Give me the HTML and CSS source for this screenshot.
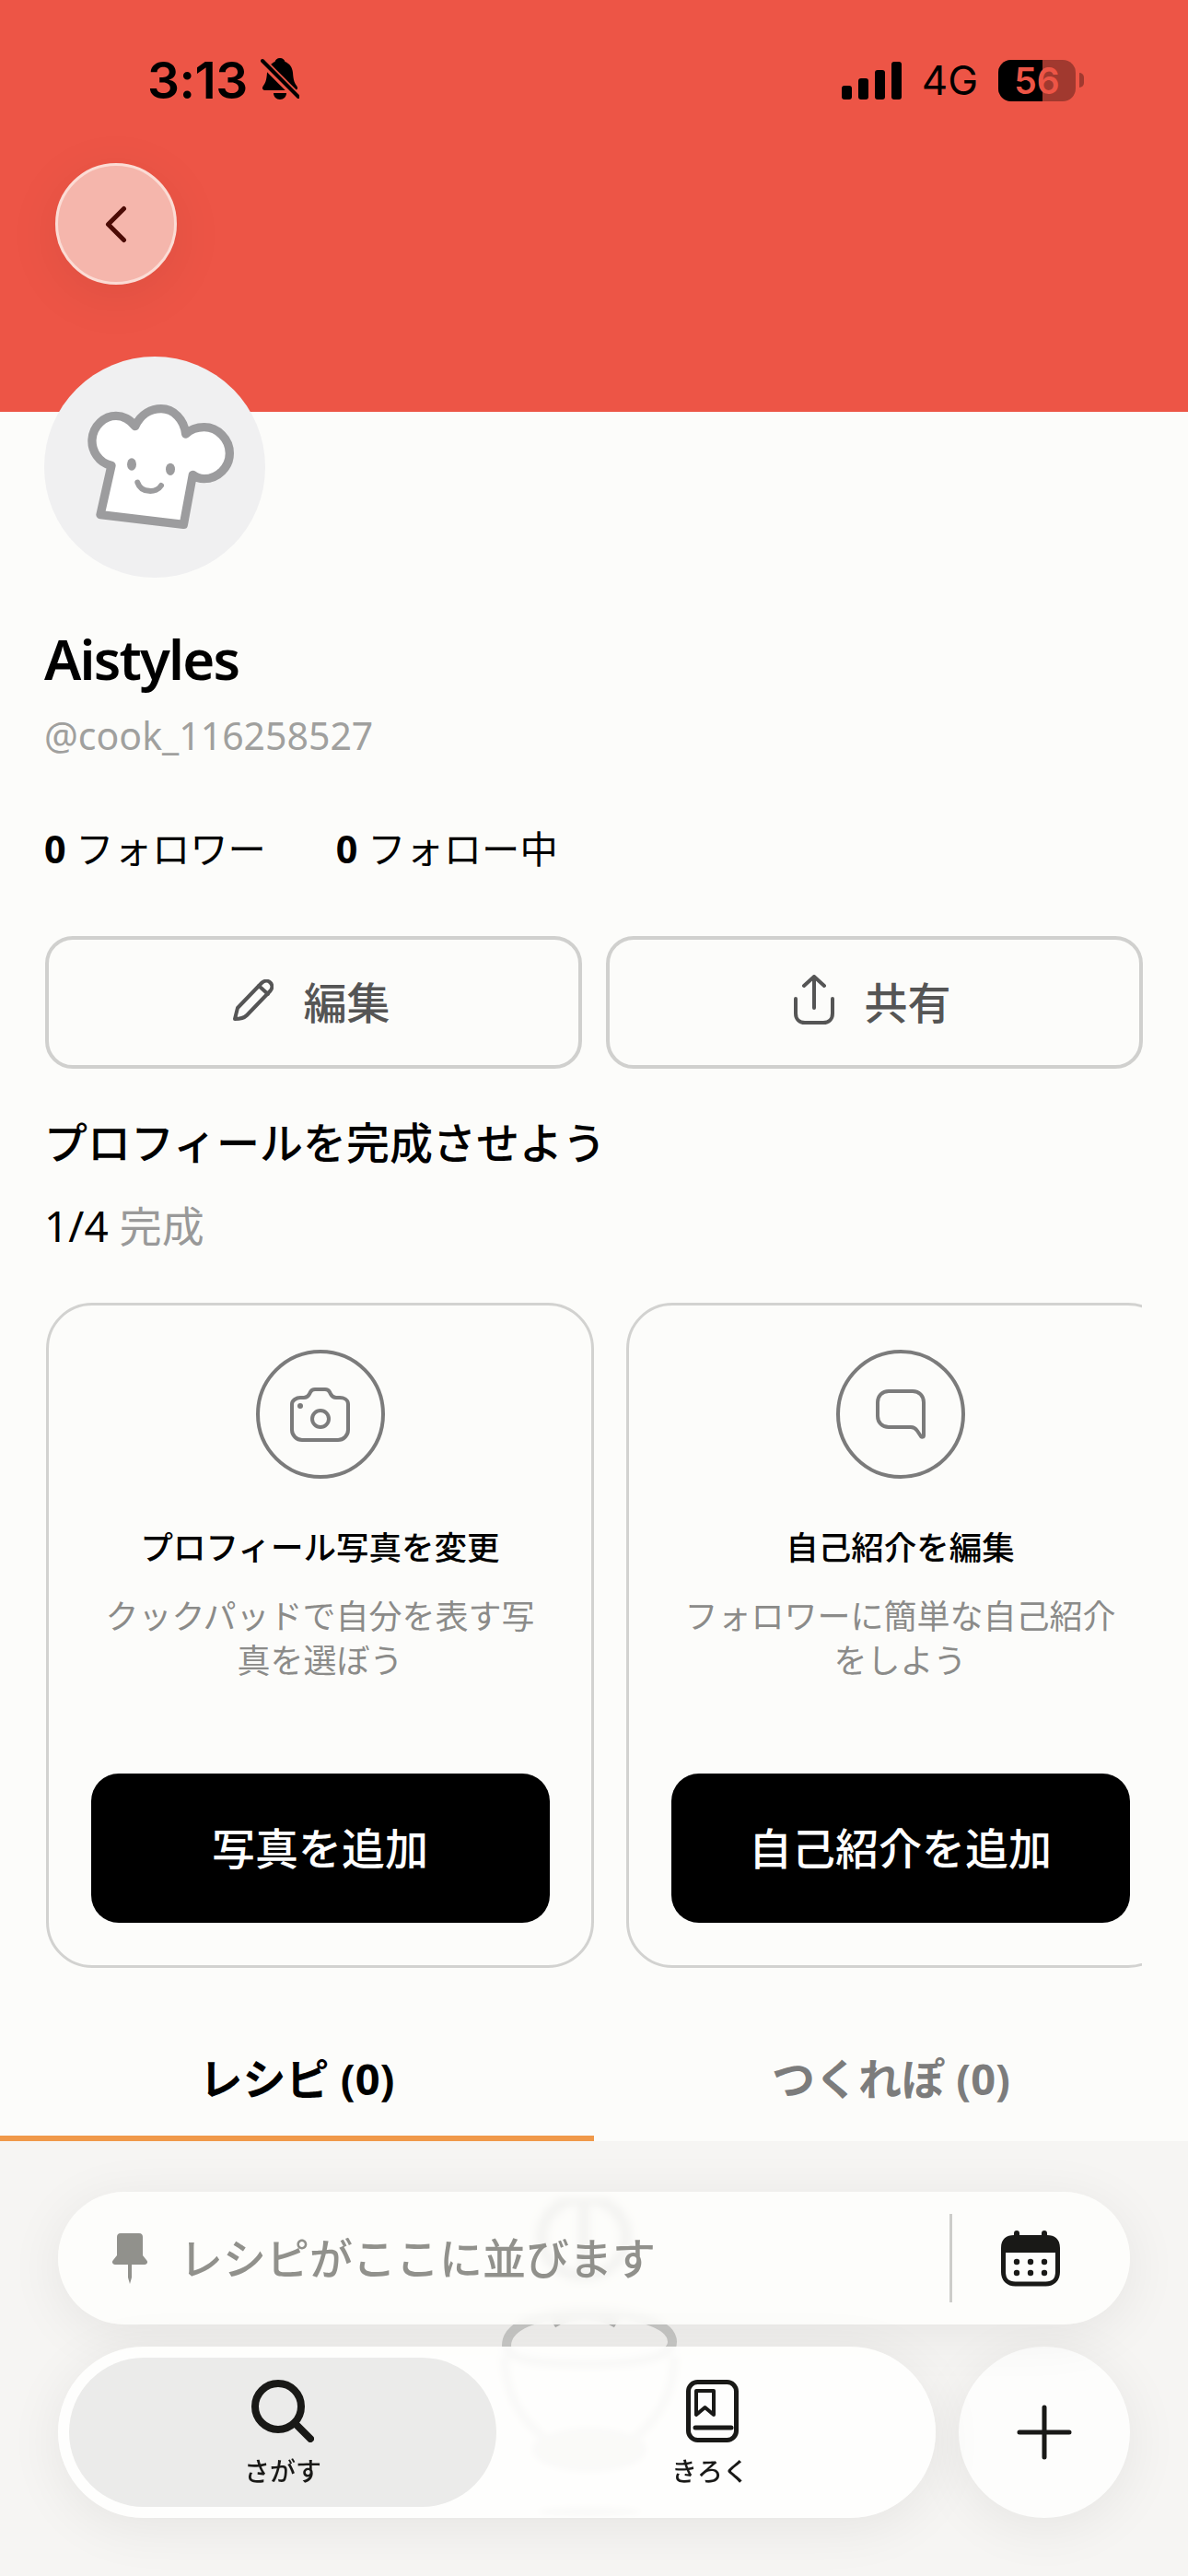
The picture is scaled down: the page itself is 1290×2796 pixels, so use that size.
FILE: index.html
```html
<!DOCTYPE html>
<html lang="ja">

<head>
    <meta charset="UTF-8">
    <meta name="viewport" content="width=device-width, initial-scale=1.0">
    <title>Aistyles</title>
    <link rel="stylesheet" href="styles.css">
</head>

<body>

    <header class="top">
        <div class="status">
            <div class="status-left">
                <span class="time">3:13</span>
                <svg class="bell" width="42" height="46" viewBox="0 0 42 46">
                    <path d="M21 0c3 0 5 2 5.500 4 5 2 8 6 8.500 12 .5 6 1 10 4 14 2 2.500 1 5-2 5H5c-3 0-4-2.500-2-5 3-4 3.500-8 4-14C7.500 10 11 6 15.500 4 16 2 18 0 21 0z"/>
                    <path d="M14 38h14c0 4-3 7-7 7s-7-3-7-7z"/>
                    <path class="bell-gap" d="M1 3l40 40"/>
                    <path class="bell-slash" d="M2 3l39 39"/>
                </svg>
            </div>
            <div class="status-right">
                <div class="signal">
                    <span class="bar bar1"></span>
                    <span class="bar bar2"></span>
                    <span class="bar bar3"></span>
                    <span class="bar bar4"></span>
                </div>
                <span class="network">4G</span>
                <div class="battery">
                    <div class="battery-level"></div>
                    <span class="battery-text">56</span>
                </div>
                <div class="battery-cap"></div>
            </div>
        </div>
        <button class="back">
            <svg width="30" height="47" viewBox="0 0 30 47">
                <path d="M21.500 6.500L4.500 23.500 21.500 40.500"/>
            </svg>
        </button>
    </header>

    <main class="profile">
        <div class="avatar">
            <svg width="240" height="240" viewBox="24 20 720 720">
                <path class="hat" d="M207 535L243 375C200 365 178 325 180 290C183 245 220 213 258 213C280 213 305 225 320 247C340 205 375 190 405 190C445 190 480 225 485 272C505 253 525 250 545 250C590 250 628 290 628 335C628 380 590 418 545 418C530 418 518 414 508 405L478 567Z"/>
                <ellipse class="hat-eye" cx="309" cy="371" rx="15" ry="20"/>
                <ellipse class="hat-eye" cx="435" cy="387" rx="15" ry="20"/>
                <path class="hat-smile" d="M328 430C340 465 390 465 405 440"/>
            </svg>
        </div>

        <h1 class="name">Aistyles</h1>
        <p class="handle">@cook_116258527</p>

        <div class="stats">
            <span class="stat"><b>0</b> フォロワー</span>
            <span class="stat"><b>0</b> フォロー中</span>
        </div>

        <div class="actions">
            <button class="action">
                <svg width="44" height="45" viewBox="0 0 44 45">
                    <path d="M2 43l3-12L31 4c3-3 7-3 9.500-.5s2.500 6 0 9L15 39c-3 3-8 4-13 4z"/>
                    <path d="M28 7l10 9"/>
                </svg>
                <span>編集</span>
            </button>
            <button class="action">
                <svg width="44" height="54" viewBox="0 0 44 54">
                    <path d="M22 2v34M11 12L22 2l11 10"/>
                    <path d="M2 26v16c0 6 4 10 10 10h20c6 0 10-4 10-10V26"/>
                </svg>
                <span>共有</span>
            </button>
        </div>

        <h2 class="complete-title">プロフィールを完成させよう</h2>
        <p class="progress">1/4 <span class="progress-label">完成</span></p>

        <div class="cards">
            <div class="card">
                <div class="card-icon">
                    <svg width="65" height="59" viewBox="0 0 65 59">
                        <path d="M11 11h4c3 0 5-2 6-4l1-2c1-2 3-3 5-3h11c2 0 4 1 5 3l1 2c1 2 3 4 6 4h4c4 0 9 2 9 7v28c0 6-5 11-11 11H13C7 57 2 52 2 46V18c0-4 5-7 9-7z"/>
                        <circle cx="33" cy="34" r="9"/>
                        <circle class="dot" cx="11" cy="20" r="3"/>
                    </svg>
                </div>
                <h3 class="card-title">プロフィール写真を変更</h3>
                <p class="card-text">クックパッドで自分を表す写真を選ぼう</p>
                <button class="card-button">写真を追加</button>
            </div>
            <div class="card">
                <div class="card-icon">
                    <svg width="54" height="54" viewBox="0 0 54 54">
                        <path d="M14 2h26c7 0 12 5 12 12v36c0 2-2 2-3 1l-4-6c-2-3-4-4-7-4H14C7 41 2 36 2 29V14C2 7 7 2 14 2z"/>
                    </svg>
                </div>
                <h3 class="card-title">自己紹介を編集</h3>
                <p class="card-text">フォロワーに簡単な自己紹介をしよう</p>
                <button class="card-button">自己紹介を追加</button>
            </div>
        </div>
    </main>

    <nav class="tabs">
        <div class="tab tab-active">レシピ (0)</div>
        <div class="tab">つくれぽ (0)</div>
    </nav>

    <section class="recipes">
        <!-- faint bowl picture behind the dock -->
        <svg class="ghost" width="260" height="370" viewBox="0 0 260 370">
            <ellipse class="ghost-whisk" cx="124" cy="42" rx="46" ry="42"/>
            <path class="ghost-whisk" d="M124 0v84"/>
            <path class="ghost-whisk" d="M90 135c20-12 50-12 70 0"/>
            <path class="ghost-line" d="M40 160c0-24 40-36 90-36s90 12 90 32c0 14-26 24-90 24s-90-6-90-20z"/>
            <path class="ghost-soft" d="M38 172c0 50 30 84 60 98h64c30-14 60-48 60-98"/>
            <ellipse class="ghost-fill" cx="130" cy="273" rx="62" ry="24"/>
            <ellipse class="ghost-fill" cx="130" cy="340" rx="56" ry="5"/>
        </svg>

        <div class="dock">
            <div class="search">
                <svg class="pin" width="38" height="55" viewBox="0 0 38 55">
                    <path d="M9 0h20c3 0 4 2 4 4v20l4 5c2 2 1 5-2 5H21v14l-2 7-2-7V34H3c-3 0-4-3-2-5l4-5V4c0-2 1-4 4-4z"/>
                </svg>
                <span class="search-text">レシピがここに並びます</span>
                <span class="divider"></span>
                <svg class="calendar" width="64" height="61" viewBox="0 0 64 61">
                    <path class="cal-head" d="M17 0c2 0 3 1 3 3v2h24V3c0-2 1-3 3-3s3 1 3 3v2c8 0 14 4 14 14v5H0v-5C0 9 6 5 14 5V3c0-2 1-3 3-3z"/>
                    <path class="cal-body" d="M2.500 22v23c0 8 5 13 13 13h33c8 0 13-5 13-13V22"/>
                    <circle class="cal-dot" cx="17" cy="34" r="3.200"/>
                    <circle class="cal-dot" cx="32" cy="34" r="3.200"/>
                    <circle class="cal-dot" cx="47" cy="34" r="3.200"/>
                    <circle class="cal-dot" cx="17" cy="46" r="3.200"/>
                    <circle class="cal-dot" cx="32" cy="46" r="3.200"/>
                    <circle class="cal-dot" cx="47" cy="46" r="3.200"/>
                </svg>
            </div>
            <div class="dock-row">
                <div class="nav">
                    <div class="nav-item nav-active">
                        <svg width="68" height="68" viewBox="0 0 68 68">
                            <circle cx="29" cy="29" r="25"/>
                            <path d="M47 47l17 17"/>
                        </svg>
                        <span>さがす</span>
                    </div>
                    <div class="nav-item">
                        <svg class="book" width="57" height="68" viewBox="0 0 57 68">
                            <rect x="2.500" y="2.500" width="52" height="63" rx="10"/>
                            <path class="book-mark" d="M11 12h19v26l-9.500-8L11 38z"/>
                            <path d="M10 52h39"/>
                        </svg>
                        <span>きろく</span>
                    </div>
                </div>
                <button class="add">
                    <svg width="60" height="60" viewBox="0 0 60 60">
                        <path d="M30 3v54M3 30h54"/>
                    </svg>
                </button>
            </div>
        </div>
    </section>

</body>

</html>
```

FILE: styles.css
```css
* {
    box-sizing: border-box;
}

body {
    margin: 0;
    width: 1290px;
    height: 2796px;
    display: flex;
    flex-direction: column;
    overflow: hidden;
    background-color: #fcfcfa;
    color: #000;
    font-family: "Noto Sans", "Noto Sans CJK JP", sans-serif;
}

h1, h2, h3, p {
    margin: 0;
    font-weight: normal;
}

button {
    padding: 0;
    border: none;
    font-family: inherit;
}

/* red header */
.top {
    height: 447px;
    flex-shrink: 0;
    background-color: #ed5546;
}

.status {
    height: 54px;
    margin-top: 0;
    padding: 0 113px 0 160px;
    display: flex;
    justify-content: space-between;
    align-items: center;
    transform: translateY(60px);
}

.status-left {
    display: flex;
    align-items: center;
    gap: 14px;
}

.time {
    font-family: Inter, sans-serif;
    font-size: 55px;
    font-weight: 600;
    line-height: 54px;
    letter-spacing: -0.5px;
}

.bell {
    margin-top: -2px;
}

.bell-gap {
    fill: none;
    stroke: #ed5546;
    stroke-width: 9;
}

.bell-slash {
    fill: none;
    stroke: #000;
    stroke-width: 4;
    stroke-linecap: round;
}

.status-right {
    display: flex;
    align-items: center;
}

.signal {
    display: flex;
    align-items: flex-end;
    gap: 7px;
    height: 41px;
    margin-right: 22px;
}

.bar {
    width: 11px;
    background-color: #000;
    border-radius: 3px;
}

.bar1 { height: 15px; }
.bar2 { height: 23px; }
.bar3 { height: 32px; }
.bar4 { height: 41px; }

.network {
    font-family: Inter, sans-serif;
    font-size: 44px;
    line-height: 54px;
    margin-right: 22px;
}

.battery {
    position: relative;
    width: 84px;
    height: 45px;
    border-radius: 14px;
    overflow: hidden;
    background-color: rgba(0, 0, 0, 0.32);
}

.battery-level {
    width: 48px;
    height: 100%;
    background-color: #000;
}

.battery-text {
    position: absolute;
    top: 0;
    left: 0;
    width: 100%;
    text-align: center;
    font-family: Inter, sans-serif;
    font-size: 39px;
    font-weight: 600;
    line-height: 45px;
    color: #ed5546;
}

.battery-cap {
    width: 5px;
    height: 16px;
    margin-left: 4px;
    border-radius: 0 5px 5px 0;
    background-color: rgba(0, 0, 0, 0.32);
}

.back {
    display: flex;
    justify-content: center;
    align-items: center;
    width: 132px;
    height: 132px;
    margin: 123px 0 0 60px;
    border: 3px solid #fbdcd5;
    border-radius: 50%;
    background-color: #f5b6ac;
    box-shadow: 0 12px 60px rgba(0, 0, 0, 0.07);
}

.back svg {
    margin-left: 4px;
}

.back path {
    fill: none;
    stroke: #4b0b05;
    stroke-width: 5;
    stroke-linecap: round;
    stroke-linejoin: round;
}

/* profile */
.profile {
    padding: 0 0 0 48px;
}

.avatar {
    width: 240px;
    height: 240px;
    margin-top: -60px;
    border-radius: 50%;
    background-color: #f0f0f1;
    position: relative;
}

.hat {
    fill: #fff;
    stroke: #9c9c9e;
    stroke-width: 28;
    stroke-linejoin: round;
}

.hat-eye {
    fill: #9c9c9e;
}

.hat-smile {
    fill: none;
    stroke: #9c9c9e;
    stroke-width: 18;
    stroke-linecap: round;
}

.name {
    margin-top: 48px;
    font-size: 60px;
    font-weight: 600;
    line-height: 80px;
    letter-spacing: -1.800px;
}

.handle {
    margin-top: 15px;
    font-size: 41px;
    line-height: 56px;
    color: #a0a09e;
}

.stats {
    display: flex;
    gap: 76px;
    margin-top: 67px;
    font-size: 41.300px;
    line-height: 56px;
}

.actions {
    display: flex;
    gap: 26px;
    margin-top: 67px;
    padding-left: 1px;
}

.action {
    display: flex;
    justify-content: center;
    align-items: center;
    gap: 33px;
    width: 583px;
    height: 144px;
    padding: 0 5px 6px 0;
    border: 4px solid #d0d0ce;
    border-radius: 30px;
    background-color: #fcfcfa;
    font-size: 47px;
    font-weight: 500;
    color: #555;
}

.action svg path {
    fill: none;
    stroke: #555;
    stroke-width: 4;
    stroke-linecap: round;
    stroke-linejoin: round;
}

.complete-title {
    margin-top: 50px;
    font-size: 47px;
    font-weight: 500;
    line-height: 60px;
}

.progress {
    margin-top: 30px;
    font-size: 46px;
    line-height: 60px;
}

.progress-label {
    color: #999;
}

.cards {
    display: flex;
    gap: 35px;
    width: 1192px;
    margin-top: 54px;
    padding-left: 2px;
    overflow: hidden;
}

.card {
    display: flex;
    flex-direction: column;
    align-items: center;
    flex-shrink: 0;
    width: 595px;
    height: 722px;
    padding: 48px 46px 46px;
    border: 3px solid #d2d2d0;
    border-radius: 50px;
}

.card-icon {
    display: flex;
    justify-content: center;
    align-items: center;
    width: 140px;
    height: 140px;
    border: 4px solid #7b7b7b;
    border-radius: 50%;
}

.card-icon path,
.card-icon circle {
    fill: none;
    stroke: #7b7b7b;
    stroke-width: 4;
    stroke-linejoin: round;
}

.card-icon .dot {
    fill: #7b7b7b;
    stroke: none;
}

.card-title {
    margin-top: 49px;
    font-size: 35.500px;
    font-weight: 500;
    line-height: 50px;
    white-space: nowrap;
}

.card-text {
    width: 480px;
    margin-top: 27px;
    font-size: 36px;
    line-height: 48px;
    text-align: center;
    color: #8b8b89;
}

.card-button {
    flex-shrink: 0;
    width: 498px;
    height: 162px;
    margin-top: auto;
    padding-bottom: 6px;
    border-radius: 30px;
    background-color: #000;
    font-size: 47px;
    font-weight: 500;
    color: #fff;
}

/* tabs */
.tabs {
    display: flex;
    margin-top: 40px;
    position: relative;
    flex-shrink: 0;
    background-color: #fcfcfa;
    box-shadow: 0 16px 24px -10px rgba(0, 0, 0, 0.04);
}

.tab {
    width: 50%;
    padding: 50px 0 32px;
    border-bottom: 6px solid transparent;
    text-align: center;
    font-size: 47px;
    font-weight: 700;
    line-height: 60px;
    color: #7c7c7c;
}

.tab-active {
    border-bottom-color: #f0994a;
    color: #000;
}

/* bottom part, the dock floats over an empty list */
.recipes {
    position: relative;
    flex: 1;
    background-color: #f6f5f3;
}

.ghost {
    position: absolute;
    left: 510px;
    top: 62px;
}

.ghost-whisk {
    fill: none;
    stroke: #b4b4b2;
    stroke-width: 12;
}

.ghost-line {
    fill: none;
    stroke: #cbcbc9;
    stroke-width: 10;
}

.ghost-soft {
    fill: none;
    stroke: #cfcfcd;
    stroke-width: 10;
}

.ghost-fill {
    fill: #d0d0ce;
}

.dock {
    position: absolute;
    left: 63px;
    right: 63px;
    bottom: 63px;
    display: flex;
    flex-direction: column;
    gap: 24px;
}

.search {
    display: flex;
    align-items: center;
    height: 144px;
    padding-left: 59px;
    border-radius: 72px;
    background-color: rgba(254, 254, 252, 0.86);
    backdrop-filter: blur(4px);
    box-shadow: 0 10px 60px rgba(0, 0, 0, 0.07);
}

.pin {
    fill: #91918c;
    margin-right: 35px;
}

.search-text {
    flex: 1;
    padding-bottom: 5px;
    font-size: 47px;
    font-weight: 500;
    color: #91918c;
}

.divider {
    width: 3px;
    height: 96px;
    background-color: #cdcdca;
}

.calendar {
    margin: 0 76px 0 53px;
}

.cal-head {
    fill: #191917;
}

.cal-body {
    fill: none;
    stroke: #191917;
    stroke-width: 5;
}

.cal-dot {
    fill: #191917;
}

.dock-row {
    display: flex;
    gap: 25px;
}

.nav {
    display: flex;
    flex: 1;
    height: 186px;
    padding: 12px;
    border-radius: 93px;
    background-color: rgba(255, 255, 254, 0.88);
    backdrop-filter: blur(3px);
    box-shadow: 0 10px 60px rgba(0, 0, 0, 0.07);
}

.nav-item {
    display: flex;
    flex-direction: column;
    align-items: center;
    width: 464px;
    height: 162px;
    padding-top: 24px;
    border-radius: 81px;
    font-size: 28px;
    font-weight: 500;
    line-height: 40px;
    color: #191917;
}

.nav-item span {
    margin-top: 11px;
}

.nav-active {
    background-color: #ebebea;
}

.nav-item svg circle,
.nav-item svg path {
    fill: none;
    stroke: #191917;
    stroke-width: 8;
    stroke-linecap: round;
}

.nav-item .book {
    margin-left: 5px;
}

.nav-item .book rect,
.nav-item .book path {
    fill: none;
    stroke: #191917;
    stroke-width: 5;
}

.nav-item .book .book-mark {
    stroke-width: 4;
    stroke-linejoin: round;
}

.add {
    display: flex;
    justify-content: center;
    align-items: center;
    flex-shrink: 0;
    width: 186px;
    height: 186px;
    border-radius: 50%;
    background-color: #fdfdfc;
    box-shadow: 0 10px 60px rgba(0, 0, 0, 0.07);
}

.add path {
    fill: none;
    stroke: #191917;
    stroke-width: 5;
    stroke-linecap: round;
}
```
